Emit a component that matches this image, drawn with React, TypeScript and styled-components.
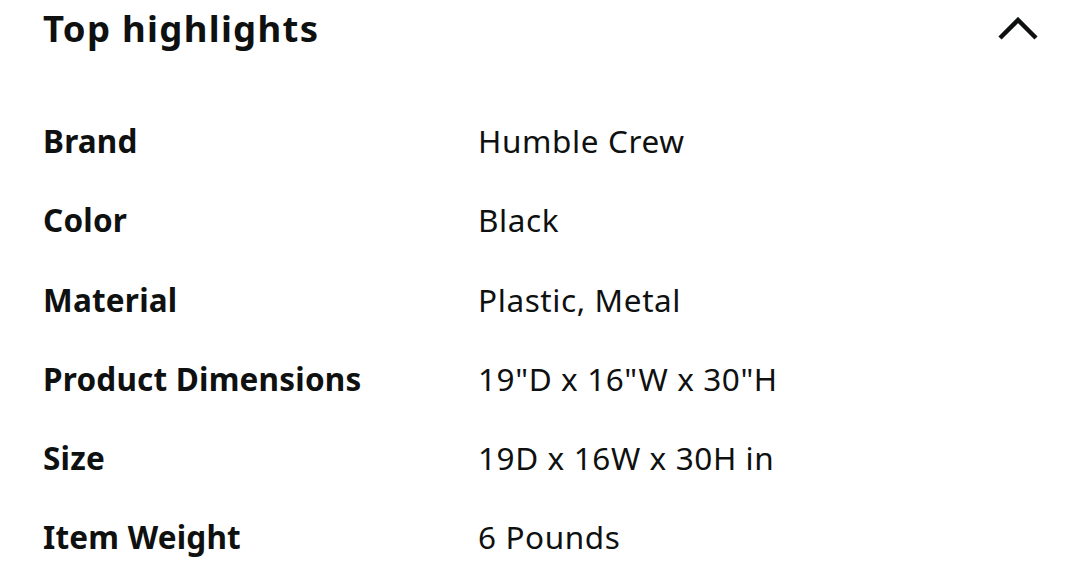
import React from "react";
import styled, { createGlobalStyle } from "styled-components";

const Global = createGlobalStyle`
  html, body { margin: 0; padding: 0; background: #fff; }
  body { font-family: "Noto Sans", "Open Sans", sans-serif; color: #0f1111; }
`;

const Page = styled.div`
  width: 1080px;
  height: 579px;
  overflow: hidden;
  background: #fff;
  padding: 0 42px 0 43px;
  box-sizing: border-box;
`;

const Header = styled.div`
  display: flex;
  align-items: center;
  justify-content: space-between;
  height: 57px;
`;

const Title = styled.h2`
  margin: 0;
  font-size: 36.5px;
  font-weight: 700;
  letter-spacing: 1.3px;
  line-height: 1;
`;

const Chevron = styled.svg`
  width: 40px;
  height: 24px;
`;

const Table = styled.div`
  display: grid;
  grid-template-columns: 435px 1fr;
  grid-auto-rows: 79.3px;
  margin-top: 64px;
`;

const Label = styled.div`
  font-size: 31.5px;
  font-weight: 700;
  letter-spacing: 0.2px;
  line-height: 40px;
`;

const Value = styled.div`
  font-size: 31.5px;
  font-weight: 400;
  letter-spacing: 0.6px;
  line-height: 40px;
`;

const rows: [string, string][] = [
  ["Brand", "Humble Crew"],
  ["Color", "Black"],
  ["Material", "Plastic, Metal"],
  ["Product Dimensions", '19"D x 16"W x 30"H'],
  ["Size", "19D x 16W x 30H in"],
  ["Item Weight", "6 Pounds"],
];

export default function App() {
  return (
    <>
      <Global />
      <Page>
        <Header>
          <Title>Top highlights</Title>
          <Chevron viewBox="0 0 40 24">
            <polyline points="2,21 20,3 38,21" fill="none" stroke="#0f1111" strokeWidth="4.5" />
          </Chevron>
        </Header>
        <Table>
          {rows.map(([k, v]) => (
            <React.Fragment key={k}>
              <Label>{k}</Label>
              <Value>{v}</Value>
            </React.Fragment>
          ))}
        </Table>
      </Page>
    </>
  );
}
